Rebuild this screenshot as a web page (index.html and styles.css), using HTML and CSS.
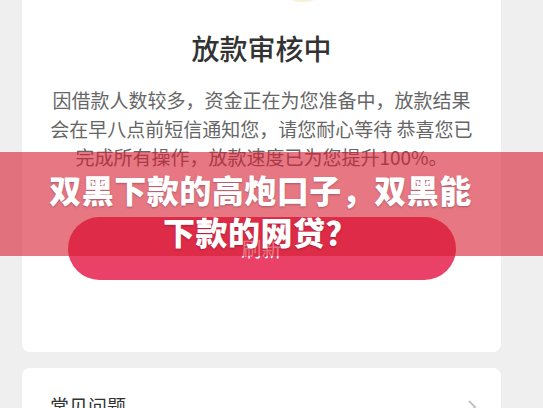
FILE: index.html
```html
<!DOCTYPE html>
<html lang="zh-CN">
<head>
<meta charset="utf-8">
<title>放款审核中</title>
<link rel="stylesheet" href="styles.css">
</head>
<body>
<div class="page">
  <section class="card status">
    <div class="icon-peek"></div>
    <h1 class="title">放款审核中</h1>
    <p class="desc">因借款人数较多，资金正在为您准备中，放款结果会在早八点前短信通知您，请您耐心等待 恭喜您已完成所有操作，放款速度已为您提升100%。</p>
    <button class="refresh">刷新</button>
  </section>
  <section class="card faq">
    <span class="faq-label">常见问题</span>
    <svg class="chevron" width="10" height="16" viewBox="0 0 10 16"><path d="M2 2 L8 8 L2 14" fill="none" stroke="#c4c4c4" stroke-width="2"/></svg>
  </section>
</div>
<div class="banner">
  <h2 class="banner-text">双黑下款的高炮口子，双黑能下款的网贷？</h2>
</div>
</body>
</html>
```
FILE: styles.css
```css
html, body {
  margin: 0;
  padding: 0;
}
body {
  background: #efefef;
  font-family: "Noto Sans CJK SC", "Noto Sans", sans-serif;
  width: 543px;
  height: 408px;
  overflow: hidden;
  position: relative;
}
.page {
  display: flex;
  flex-direction: column;
  gap: 16px;
  width: 479px;
  margin-left: 22px;
}
.card {
  background: #fff;
  border-radius: 8px;
}
.status {
  display: flex;
  flex-direction: column;
  align-items: center;
  padding: 28px 0 72px;
  border-radius: 0 0 8px 8px;
  position: relative;
}
.icon-peek {
  position: absolute;
  top: -6px;
  left: 268px;
  width: 26px;
  height: 8px;
  border-radius: 50%;
  background: #f6f1d6;
}
.title {
  margin: 0;
  font-size: 28px;
  line-height: 40px;
  font-weight: 500;
  color: #333;
}
.desc {
  margin: 18px 0 0;
  width: 428px;
  font-size: 19px;
  line-height: 28.5px;
  color: #666;
  text-align: center;
}
.refresh {
  margin-top: 45px;
  width: 388px;
  height: 63px;
  border: none;
  border-radius: 32px;
  background: #ea4169;
  color: #fff;
  font-family: inherit;
  font-size: 20px;
  padding: 0;
}
.faq {
  display: flex;
  justify-content: space-between;
  align-items: flex-start;
  height: 80px;
  padding: 24px 24px 0 28px;
  box-sizing: border-box;
}
.faq-label {
  font-size: 19px;
  line-height: 28px;
  color: #333;
}
.chevron {
  margin-top: 7px;
}
.banner {
  position: absolute;
  left: 0;
  top: 152px;
  width: 543px;
  height: 104px;
  background: rgba(214, 28, 48, 0.6);
  padding: 16px 62px 0 40px;
  box-sizing: border-box;
}
.banner-text {
  margin: 0;
  font-size: 32px;
  line-height: 42px;
  font-weight: 900;
  color: #fff;
  text-align: center;
  letter-spacing: 0.5px;
  text-shadow: 0 1px 2px rgba(0,0,0,0.25);
}
```
